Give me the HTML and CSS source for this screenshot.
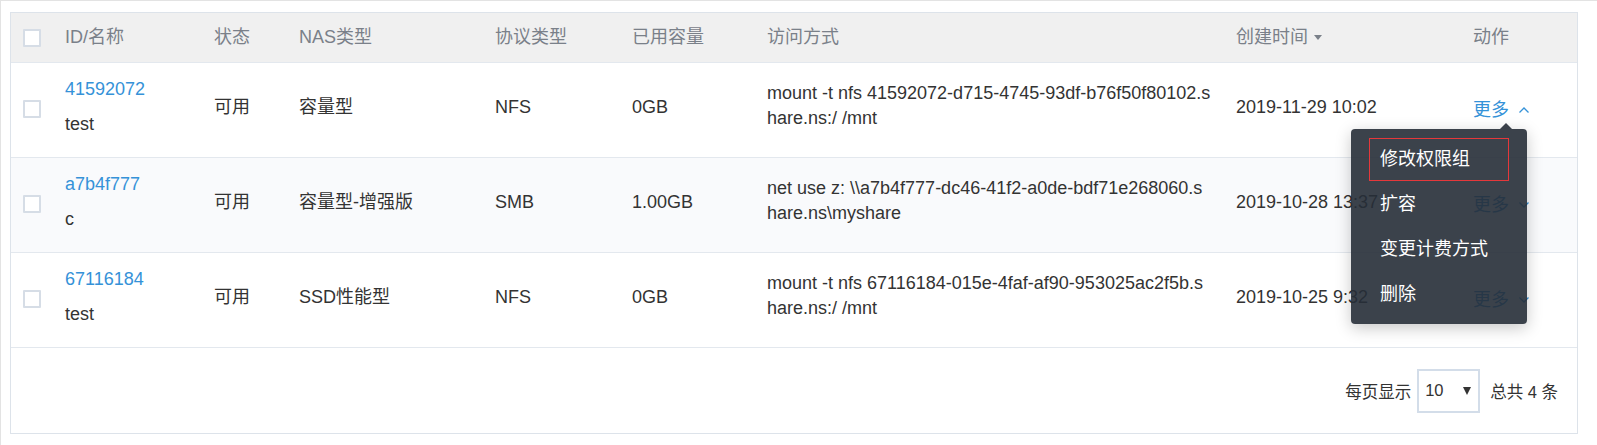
FILE: index.html
```html
<!DOCTYPE html>
<html lang="zh-CN">
<head>
<meta charset="utf-8">
<title>NAS</title>
<link rel="stylesheet" href="styles.css">
</head>
<body>
<div class="page">
  <div class="panel">
    <div class="row head">
      <div class="cell cb-cell"><span class="checkbox"></span></div>
      <div class="cell">ID/名称</div>
      <div class="cell">状态</div>
      <div class="cell">NAS类型</div>
      <div class="cell">协议类型</div>
      <div class="cell">已用容量</div>
      <div class="cell">访问方式</div>
      <div class="cell">创建时间<span class="caret"></span></div>
      <div class="cell">动作</div>
    </div>

    <div class="row body">
      <div class="cell cb-cell"><span class="checkbox"></span></div>
      <div class="cell idname"><a class="link">41592072</a><span class="name">test</span></div>
      <div class="cell">可用</div>
      <div class="cell">容量型</div>
      <div class="cell">NFS</div>
      <div class="cell">0GB</div>
      <div class="cell access">mount -t nfs 41592072-d715-4745-93df-b76f50f80102.s<br>hare.ns:/ /mnt</div>
      <div class="cell">2019-11-29 10:02</div>
      <div class="cell action">
        <span class="more-wrap">
          <a class="more">更多<svg class="chev" viewBox="0 0 12 8" width="12" height="8"><path d="M1.5 6.5 L6 2 L10.5 6.5" fill="none" stroke="currentColor" stroke-width="1.3"/></svg></a>
          <div class="menu">
            <div class="menu-item focused">修改权限组</div>
            <div class="menu-item">扩容</div>
            <div class="menu-item">变更计费方式</div>
            <div class="menu-item">删除</div>
          </div>
        </span>
      </div>
    </div>

    <div class="row body hover">
      <div class="cell cb-cell"><span class="checkbox"></span></div>
      <div class="cell idname"><a class="link">a7b4f777</a><span class="name">c</span></div>
      <div class="cell">可用</div>
      <div class="cell">容量型-增强版</div>
      <div class="cell">SMB</div>
      <div class="cell">1.00GB</div>
      <div class="cell access">net use z: \\a7b4f777-dc46-41f2-a0de-bdf71e268060.s<br>hare.ns\myshare</div>
      <div class="cell">2019-10-28 13:37</div>
      <div class="cell action"><a class="more">更多<svg class="chev" viewBox="0 0 12 8" width="12" height="8"><path d="M1.5 1.5 L6 6 L10.5 1.5" fill="none" stroke="currentColor" stroke-width="1.3"/></svg></a></div>
    </div>

    <div class="row body">
      <div class="cell cb-cell"><span class="checkbox"></span></div>
      <div class="cell idname"><a class="link">67116184</a><span class="name">test</span></div>
      <div class="cell">可用</div>
      <div class="cell">SSD性能型</div>
      <div class="cell">NFS</div>
      <div class="cell">0GB</div>
      <div class="cell access">mount -t nfs 67116184-015e-4faf-af90-953025ac2f5b.s<br>hare.ns:/ /mnt</div>
      <div class="cell">2019-10-25 9:32</div>
      <div class="cell action"><a class="more">更多<svg class="chev" viewBox="0 0 12 8" width="12" height="8"><path d="M1.5 1.5 L6 6 L10.5 1.5" fill="none" stroke="currentColor" stroke-width="1.3"/></svg></a></div>
    </div>

    <div class="pager">
      <span class="pager-label">每页显示</span>
      <span class="select"><span class="select-val">10</span><span class="select-arrow"></span></span>
      <span class="pager-total">总共 4 条</span>
    </div>
  </div>
</div>
</body>
</html>
```

FILE: styles.css
```css
html, body {
  margin: 0;
  padding: 0;
  background: #ffffff;
}

body {
  font-family: "Liberation Sans", "Noto Sans CJK SC", sans-serif;
  font-size: 18px;
  color: #333333;
  overflow: hidden;
}

.page {
  height: 433px;
  padding: 11px 0 0 9px;
  border-top: 1px solid #e3e3e3;
  border-left: 1px solid #e3e3e3;
  border-bottom: 1px solid #e3e3e3;
}

.panel {
  width: 1566px;
  height: 420px;
  border: 1px solid #dde3ea;
  display: flex;
  flex-direction: column;
}

.row {
  display: grid;
  grid-template-columns: 54px 149px 85px 196px 137px 135px 469px 237px 103px;
  border-bottom: 1px solid #e3e8ee;
}

.head {
  height: 49px;
  background: #f0f0f0;
  color: #7a8089;
}

.head .cell {
  display: flex;
  align-items: center;
  line-height: 25px;
}

.body {
  height: 94px;
  background: #ffffff;
}

.body.hover {
  background: #f9fafc;
}

.body .cell {
  display: flex;
  align-items: center;
  padding-bottom: 6px;
  line-height: 25px;
  white-space: nowrap;
}

.cb-cell {
  padding-left: 12px;
}

.checkbox {
  display: block;
  width: 14px;
  height: 14px;
  border: 2px solid #d6dde6;
  border-radius: 1px;
  background: #ffffff;
}

.body .cb-cell .checkbox {
  margin-top: 4px;
}

.caret {
  display: inline-block;
  width: 0;
  height: 0;
  margin-left: 6px;
  border-left: 4px solid transparent;
  border-right: 4px solid transparent;
  border-top: 5px solid #7a8089;
}

.idname {
  flex-direction: column;
  align-items: flex-start !important;
  justify-content: center;
}

.link {
  color: #3592d8;
  text-decoration: none;
}

.name {
  margin-top: 10px;
}

.access {
  display: block !important;
  padding-top: 18px;
}

.body .action {
  padding-top: 0;
  padding-bottom: 0;
}

.more-wrap {
  position: relative;
  display: inline-block;
}

.more {
  color: #3592d8;
  text-decoration: none;
  display: inline-flex;
  align-items: center;
}

.chev {
  margin-left: 9px;
}

.menu {
  position: absolute;
  left: -122px;
  top: 31px;
  width: 176px;
  padding: 8px 0 7px;
  box-sizing: border-box;
  background: rgba(38, 45, 55, 0.9);
  border-radius: 4px;
  box-shadow: 0 4px 16px rgba(0, 0, 0, 0.22);
  z-index: 10;
}

.menu::before {
  content: "";
  position: absolute;
  top: -6px;
  left: 149px;
  border-left: 6px solid transparent;
  border-right: 6px solid transparent;
  border-bottom: 6px solid rgba(38, 45, 55, 0.9);
}

.menu-item {
  margin: 0 17px;
  height: 45px;
  line-height: 45px;
  padding-left: 12px;
  color: #ffffff;
  font-size: 18px;
}

.menu-item.focused {
  outline: 1px solid #e5383b;
  outline-offset: -2px;
}

.pager {
  flex: 1;
  display: flex;
  align-items: center;
  justify-content: flex-end;
  padding-right: 19px;
  color: #333333;
  font-size: 16.5px;
}

.pager-label {
  margin-right: 6px;
}

.select {
  display: inline-flex;
  align-items: center;
  justify-content: space-between;
  width: 46px;
  height: 40px;
  padding: 0 7px 0 6px;
  border: 2px solid #d3dde9;
  margin-right: 10px;
}

.select-arrow {
  width: 0;
  height: 0;
  border-left: 4px solid transparent;
  border-right: 4px solid transparent;
  border-top: 8px solid #333333;
}

.pager-total {
  white-space: nowrap;
}
```
